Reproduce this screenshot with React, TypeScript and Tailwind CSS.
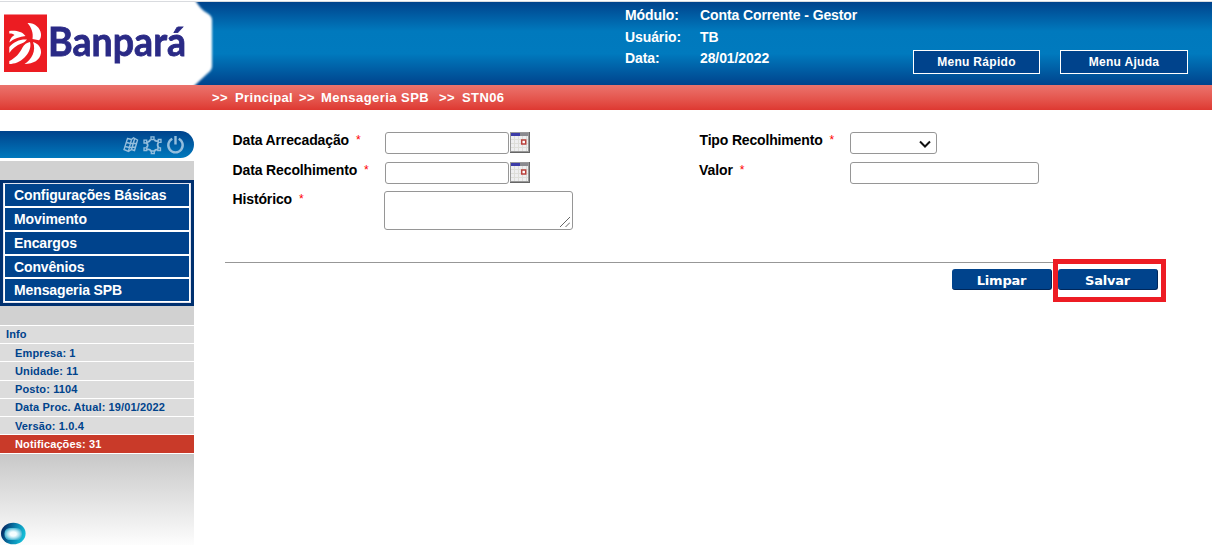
import React from "react";

const menu = [
  { label: "Configurações Básicas", size: "h-[22px]", track: "tracking-[-0.12px]" },
  { label: "Movimento", size: "h-[22px]", track: "tracking-[-0.12px]" },
  { label: "Encargos", size: "h-[22px]", track: "tracking-[-0.12px]" },
  { label: "Convênios", size: "h-[21px]", track: "tracking-[-0.14px]" },
  { label: "Mensageria SPB", size: "h-[22px]", track: "tracking-[-0.12px]" },
];

const info = [
  { label: "Empresa: 1", size: "h-[17px] leading-[18px]" },
  { label: "Unidade: 11", size: "h-[18px] leading-[18px]" },
  { label: "Posto: 1104", size: "h-[17px] leading-[16px]" },
  { label: "Data Proc. Atual: 19/01/2022", size: "h-[17px] leading-[16px]" },
  { label: "Versão: 1.0.4", size: "h-[17px] leading-[18px]" },
];

function Logo() {
  return (
    <svg className="block h-[83px] w-[214px] shrink-0" viewBox="0 2 214 83">
      <defs>
        <filter id="edge" x="-10%" y="-10%" width="120%" height="120%">
          <feGaussianBlur stdDeviation="1" />
        </filter>
        <filter id="soft">
          <feGaussianBlur stdDeviation="0.5" />
        </filter>
      </defs>
      <path d="M-6 -6H192Q199 9 207 13Q212 16 212 20V66Q212 70 208 73L194 86L188 94H-6Z" fill="#fff" filter="url(#edge)" />
      <g filter="url(#soft)">
        <rect x="4" y="14.500" width="43" height="57.500" fill="#ec1c24" />
        <path d="M9.300 31C15 30.200 22 31 25.500 36C20 36.500 14 38.500 9.300 42.500C10.200 38.500 12 36.500 14.500 35C12.500 33.500 11 33.300 9.300 33.500Z" fill="#fff" />
        <path d="M27.500 23C34 22.500 40.500 27.500 41 34C41.200 37 40.500 39 39 40.200L32.500 39C33.500 33 31.500 27.500 27.500 23Z" fill="#fff" />
        <path d="M9.300 47C14 41.500 20 39 27 39.500C26 41 24 42.500 21.500 43.500C16.500 45 12.500 48.500 9.300 53Z" fill="#fff" />
        <path d="M9.300 61C15 58.500 20 53 22.500 47.500C24 44.500 27 42.500 30 42C31.500 47 29 53 24.500 57.500C20 62 14.500 64 9.300 64Z" fill="#fff" />
        <path d="M33 42C38.500 43.500 41.500 48 41 53C40 60 33.500 64 24.500 64C31.500 59.500 36.500 51 33 42Z" fill="#fff" />
      </g>
      <text x="48" y="56.300" textLength="138" lengthAdjust="spacingAndGlyphs" fill="#2b2a86" stroke="#2b2a86" strokeWidth="0.800" fontSize="40" fontWeight="700" fontFamily="Lato, sans-serif" filter="url(#soft)">
        Banpará
      </text>
    </svg>
  );
}

function CalendarIcon() {
  return (
    <svg className="ml-px block h-[21px] w-5" viewBox="0 0 20 21" shapeRendering="crispEdges">
      <rect width="20" height="21" fill="#666" />
      <rect width="19" height="20" fill="#999" />
      <rect x="1" y="4" width="17" height="15" fill="#efeff0" />
      <rect x="1" y="1" width="9" height="3" fill="#3c3ca8" />
      <rect x="10" y="1" width="8" height="3" fill="#8b8b90" />
      <path d="M4.500 4V19M8.500 4V19M12.500 4V19M16.500 4V19M1 7.500H18M1 11.500H18M1 15.500H18" stroke="#deded9" />
      <rect x="11.700" y="8" width="4" height="4" fill="#fff" stroke="#b9403b" strokeWidth="1.500" shapeRendering="auto" />
    </svg>
  );
}

function Label({ text, track }: { text: string; track: string }) {
  return (
    <div className="flex text-[14px] leading-4 font-bold text-black">
      <span className={track}>{text}</span>
      <span className="ml-[7px] text-[12px] leading-[17px] font-normal text-[#f00]">*</span>
    </div>
  );
}

export default function App() {
  return (
    <div className="h-[559px] w-[1212px] overflow-hidden bg-white font-['Liberation_Sans',Arial,sans-serif]">
      <div className="mt-px h-px bg-[#d9dbdf]" />
      <header className="flex h-[83px] bg-[linear-gradient(#00438c_0%,#0079bd_35%,#007abe_62%,#00438c_100%)] text-white">
        <Logo />
        <div className="ml-[411px] grid w-[288px] grid-cols-[75px_1fr] grid-rows-[22px_21px_22px] pt-[5px] text-[14px] leading-4 font-bold tracking-[-0.1px]">
          <span>Módulo:</span>
          <span>Conta Corrente - Gestor</span>
          <span>Usuário:</span>
          <span>TB</span>
          <span>Data:</span>
          <span>28/01/2022</span>
        </div>
        <div className="flex gap-5 pt-12 text-[12px] leading-[22px] font-bold tracking-[0.3px]">
          <button className="h-6 w-[127px] border border-white bg-[#00438c]">Menu Rápido</button>
          <button className="h-6 w-32 border border-white bg-[#00438c]">Menu Ajuda</button>
        </div>
      </header>
      <nav className="flex h-[25px] bg-linear-to-b from-[#eb736d] to-[#de3831] pl-[212px] text-[13px] leading-[25px] font-bold text-white">
        <span className="w-[23px] tracking-[0.4px]">&gt;&gt;</span>
        <span className="w-16 tracking-[0.35px]">Principal</span>
        <span className="w-[22px] tracking-[0.4px]">&gt;&gt;</span>
        <span className="w-[118px] tracking-[0.45px]">Mensageria SPB</span>
        <span className="w-[23px] tracking-[0.4px]">&gt;&gt;</span>
        <span className="tracking-[0.4px]">STN06</span>
      </nav>
      <div className="flex">
        <aside className="w-[194px] pt-[21px]">
          <div className="flex h-[27px] items-center justify-end gap-1 rounded-r-[14px] bg-linear-to-b from-[#00438c] to-[#0079bd] pt-px pr-[9px] text-[#94bedd]">
            <svg className="h-5 w-[17px]" viewBox="0 0 17 20" fill="none" stroke="currentColor" strokeWidth="1.400">
              <path d="M5.500 3.500L9.500 4.500L11.500 2.800L15.500 5L12.500 15.500L9.500 14.500L6.500 16.500L2 14.500ZM4.500 7.500L8.500 8.500L14.500 8.500M3 11.500L7.500 12.500L13.500 12M9.500 4.500L6.500 16M12.500 4L9.500 14.500" />
            </svg>
            <svg className="h-5 w-[19px]" viewBox="0 0 19 20" fill="none" stroke="currentColor" strokeWidth="1.300">
              <path d="M4 7.500Q7 6.500 7.500 4.500M11.500 4.500Q12 6.500 15 6M15.500 7.500Q13.500 10 16 13M15 15Q12 14 11.500 16.500M8 16.500Q7.500 14 4 14.500M3.500 12.500Q6 10 3.500 8" strokeWidth="1.800" />
              <path d="M8 1.800H11V4.500H8ZM8.300 16H11.300V18.500H8.300ZM1 5.200H3.700V8H1ZM15.300 4.500H18V7.300H15.300ZM1 12.800H3.700V15.500H1ZM14.800 12.800H17.500V15.500H14.800Z" />
            </svg>
            <svg className="h-5 w-[19px]" viewBox="0 0 19 20" fill="none" stroke="currentColor" strokeWidth="2.400">
              <path d="M6.300 3.700A7.200 7.200 0 1 0 12.700 3.700M9.500 1V9.500" />
            </svg>
          </div>
          <div className="mt-[3px] h-[19px] bg-[#d1d1d1]" />
          <div className="h-[126px] bg-[#00306f] p-[3px]">
            <div className="flex h-[120px] flex-col gap-0.5 border border-[#e0e3ee] bg-white px-px">
              {menu.map((m) => (
                <div key={m.label} className={`${m.size} ${m.track} bg-[#00438c] pl-[9px] text-[14px] leading-[23px] font-bold text-white`}>
                  {m.label}
                </div>
              ))}
            </div>
          </div>
          <div className="h-[19px] bg-[#d1d1d1]" />
          <div className="flex flex-col gap-px bg-white py-px text-[11px] leading-[18px] font-bold tracking-[0.13px] text-[#00438c]">
            <div className="h-[17px] bg-[#dcdcdc] pl-[6px] leading-[16px]">Info</div>
            {info.map((i) => (
              <div key={i.label} className={`${i.size} bg-[#dcdcdc] pl-[15px]`}>{i.label}</div>
            ))}
            <div className="h-[18px] bg-[#c93a29] pl-[15px] text-white">Notificações: 31</div>
          </div>
          <div className="flex h-[91px] items-end bg-linear-to-b from-[#c8c8c8] to-[#fdfdfd]">
            <svg className="h-[23px] w-[27px]" viewBox="0 0 27 23">
              <defs>
                <linearGradient id="orb" x1="0" y1="0.300" x2="1" y2="0.600">
                  <stop stopColor="#02215d" />
                  <stop offset="0.500" stopColor="#087fac" />
                  <stop offset="1" stopColor="#16c4dc" />
                </linearGradient>
                <radialGradient id="glow">
                  <stop offset="0.350" stopColor="#f4fdff" />
                  <stop offset="0.700" stopColor="#a3dcec" />
                  <stop offset="1" stopColor="#49b6d2" />
                </radialGradient>
              </defs>
              <ellipse cx="13.300" cy="11.500" rx="12.300" ry="10.800" fill="url(#orb)" />
              <rect x="4.500" y="6" width="17.500" height="12" rx="5.500" fill="url(#glow)" />
            </svg>
          </div>
        </aside>
        <main className="w-[1018px]">
          <div className="flex h-[152px] pt-[22px] pl-[38px]">
            <div className="grid w-[467px] grid-cols-[153px_1fr] grid-rows-[30px_29px_40px]">
              <Label text="Data Arrecadação" track="pl-[0.5px] tracking-[-0.13px]" />
              <div className="flex">
                <input className="h-[22px] w-[124px] rounded-[3px] border border-[#969696] outline-none" />
                <CalendarIcon />
              </div>
              <Label text="Data Recolhimento" track="pl-[0.5px] tracking-[-0.13px]" />
              <div className="flex">
                <input className="h-[22px] w-[124px] rounded-[3px] border border-[#969696] outline-none" />
                <CalendarIcon />
              </div>
              <Label text="Histórico" track="pl-[0.5px] tracking-[-0.13px]" />
              <div className="-ml-px flex h-[39px] w-[189px] items-end justify-end rounded-[3px] border border-[#969696] p-0.5">
                <svg className="h-[10px] w-[10px]" viewBox="0 0 10 10" fill="none" stroke="#666">
                  <path d="M0 10L10 0M5.500 10L10 5.500" />
                </svg>
              </div>
            </div>
            <div className="grid w-[340px] grid-cols-[151px_1fr] grid-rows-[30px_30px]">
              <Label text="Tipo Recolhimento" track="pl-[0.5px] tracking-[-0.16px]" />
              <div className="flex h-[22px] w-[87px] justify-end rounded-[3px] border border-[#969696] pt-[7px] pr-[5px]">
                <svg className="h-[9px] w-3" viewBox="0 0 12 9" fill="none" stroke="#111" strokeWidth="2">
                  <path d="M1 1.500L6 6.500L11 1.500" />
                </svg>
              </div>
              <Label text="Valor" track="tracking-[-0.1px]" />
              <input className="h-[22px] w-[189px] rounded-[3px] border border-[#969696] outline-none" />
            </div>
          </div>
          <div className="ml-[31px] h-px w-[937px] bg-[#979797]" />
          <div className="-mt-[4px] flex h-[43px] justify-end pr-[46px] font-['DejaVu_Sans',Verdana,sans-serif] text-[13px] leading-[22px] font-bold text-white">
            <button className="mt-[10px] mr-px h-[21px] w-[100px] rounded-[3px] border-r border-b border-[#00275a] bg-[#00438c] pt-px tracking-[-0.2px]">Limpar</button>
            <div className="h-[43px] w-[113px] border-[5px] border-[#ed1c24]">
              <button className="mt-[5px] h-[21px] w-[100px] rounded-[3px] border-r border-b border-[#00275a] bg-[#00438c] pt-px tracking-[-0.2px]">Salvar</button>
            </div>
          </div>
        </main>
      </div>
    </div>
  );
}
